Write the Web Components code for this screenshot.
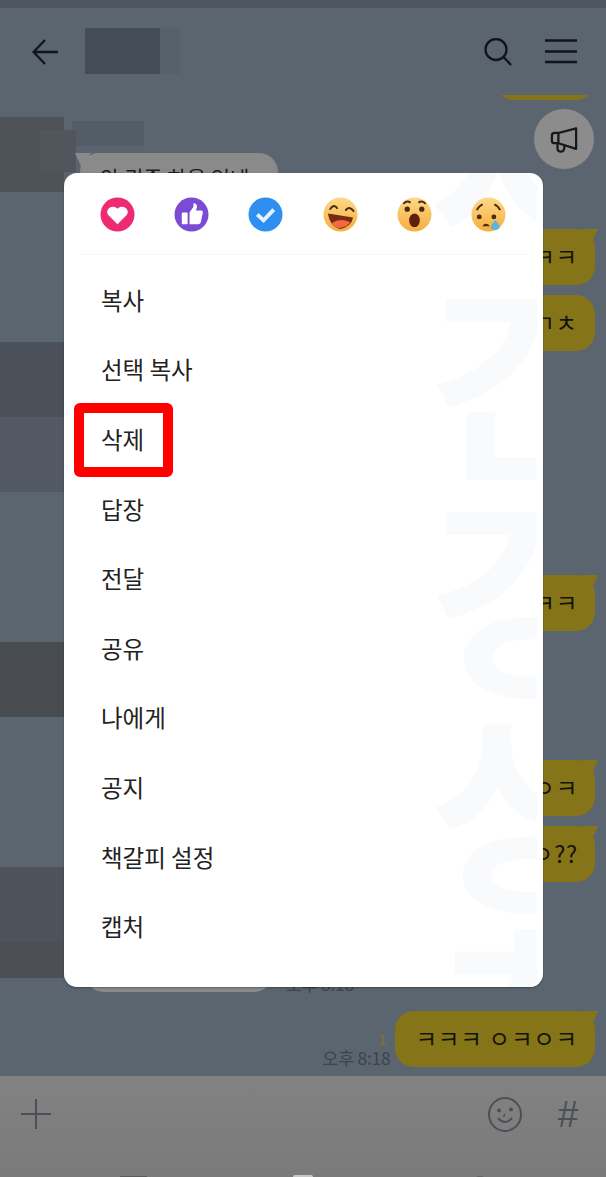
<!DOCTYPE html>
<html>
    <head>
        <meta charset="utf-8" />
        <title>Chat menu</title>
        <style>
            html, body { margin: 0; padding: 0; }
            body { font-family: "Noto Sans CJK KR", "Noto Sans", sans-serif; }
        </style>
    </head>
    <body>
        <chat-screen>
            <chat-header></chat-header>
            <chat-log>
                <left-blocks slot="left"></left-blocks>
                <chat-bubble style="margin-top:-51px;width:100px"></chat-bubble>
                <div style="margin:21px 0 0 8px;width:72px;height:25px;background:#525d68"></div>
                <chat-bubble side="left" tail style="margin:7px 0 0 16px;width:198px;height:48px">안 귀중 하울 있네</chat-bubble>
                <chat-bubble tail style="margin-top:28px">ㅋㅋㅋㅋ ㅋㅋㅋ</chat-bubble>
                <chat-bubble style="margin-top:10px">ㅋㅋㅋ ㄱㅊ</chat-bubble>
                <chat-bubble tail style="margin-top:224px">ㅋㅋㅋㅋ</chat-bubble>
                <chat-bubble tail style="margin-top:129px">ㅋㅋㅇㅋ</chat-bubble>
                <chat-bubble tail style="margin-top:10px">ㅋㅋㅋ ㅇ??</chat-bubble>
                <div style="margin:58px 0 0 21px;display:flex;align-items:flex-end;gap:13px">
                    <chat-bubble side="left" style="width:188px;height:52px"></chat-bubble>
                    <span style="font-size:17px;line-height:18px;color:#3d444c;margin-bottom:-1px">오후 8:18</span>
                </div>
                <div style="margin-top:19px;display:flex;justify-content:flex-end;align-items:flex-end;gap:5px">
                    <div style="display:flex;flex-direction:column;align-items:flex-end;margin-bottom:-1px">
                        <span style="font-size:14px;line-height:18px;color:#857518;margin-right:4px">1</span>
                        <span style="font-size:17.5px;line-height:20px;letter-spacing:-0.3px;color:#3d444c">오후 8:18</span>
                    </div>
                    <chat-bubble tail style="margin:0">ㅋㅋㅋ ㅇㅋㅇㅋ</chat-bubble>
                </div>
            </chat-log>
            <chat-input></chat-input>
            <context-menu>
                <menu-item>복사</menu-item>
                <menu-item>선택 복사</menu-item>
                <menu-item marked>삭제</menu-item>
                <menu-item>답장</menu-item>
                <menu-item>전달</menu-item>
                <menu-item>공유</menu-item>
                <menu-item>나에게</menu-item>
                <menu-item>공지</menu-item>
                <menu-item>책갈피 설정</menu-item>
                <menu-item>캡처</menu-item>
            </context-menu>
        </chat-screen>

        <script>
            // small helper, every element is just a shadow root with static markup
            function element(name, html) {
                customElements.define(name, class extends HTMLElement {
                    constructor() {
                        super()
                        this.attachShadow({ mode: 'open' }).innerHTML = html
                    }
                })
            }

            element('chat-screen', `
                <style>
                    :host {
                        display: flex;
                        flex-direction: column;
                        position: relative;
                        width: 606px;
                        height: 1177px;
                        overflow: hidden;
                        background: #5a6570;
                        border-top: 8px solid #4d5661;
                        box-sizing: border-box;
                    }
                </style>
                <slot></slot>
            `)

            element('chat-header', `
                <style>
                    :host {
                        display: flex;
                        align-items: center;
                        flex: none;
                        height: 87px;
                        padding: 0 29px 0 32px;
                        box-sizing: border-box;
                    }
                    .title { display: flex; height: 46px; margin: -1px 0 0 27px; }
                    .title i { width: 75px; background: #444c55; }
                    .title b { width: 20px; background: #57616b; }
                    .right { display: flex; align-items: center; gap: 33px; margin-left: auto; }
                    svg { display: block; fill: none; stroke: #10151a; stroke-width: 2.3; }
                </style>
                <svg width="26" height="26" viewBox="0 0 26 26" style="margin-top:1px">
                    <path d="M26 13H1.5M13 1L1.5 13L13 25" />
                </svg>
                <div class="title"><i></i><b></b></div>
                <div class="right">
                    <svg width="28" height="28" viewBox="0 0 28 28">
                        <circle cx="12" cy="11.5" r="10.5" />
                        <path d="M19.5 19L27 27" />
                    </svg>
                    <svg width="32" height="25" viewBox="0 0 32 25">
                        <path d="M0 1.5H32M0 12.5H32M0 23H32" stroke-width="2.6" />
                    </svg>
                </div>
            `)

            element('chat-log', `
                <style>
                    :host {
                        display: grid;
                        grid-template-columns: 64px 1fr;
                        flex: 1;
                        min-height: 0;
                        position: relative;
                        overflow: hidden;
                    }
                    .msgs { display: flex; flex-direction: column; padding-right: 11px; min-width: 0; }
                    .msgs ::slotted(chat-bubble) { align-self: flex-end; }
                    .msgs ::slotted(chat-bubble[side="left"]) { align-self: flex-start; }
                    .notice {
                        position: absolute;
                        top: 14px;
                        right: 12px;
                        width: 60px;
                        height: 60px;
                        display: flex;
                        align-items: center;
                        justify-content: center;
                        border-radius: 50%;
                        background: #8c8c8c;
                    }
                    svg { fill: none; stroke: #16191c; stroke-width: 2.4; stroke-linejoin: round; }
                </style>
                <slot name="left"></slot>
                <div class="msgs"><slot></slot></div>
                <div class="notice">
                    <svg width="28" height="27" viewBox="0 0 30 28">
                        <path d="M28 2V24L9 18H5Q2 18 2 15V10Q2 7 5 7H9Z" />
                        <path d="M9 7V18M8 18V23Q8 27 12 27Q15.500 27 15.500 21" />
                    </svg>
                </div>
            `)

            element('left-blocks', `
                <style>
                    :host { display: flex; flex-direction: column; position: relative; }
                    div { height: 75px; flex: none; }
                    .a { margin-top: 22px; background: #4d5359; position: relative; }
                    .a::after {
                        content: '';
                        position: absolute;
                        left: 40px;
                        top: 13px;
                        width: 36px;
                        height: 42px;
                        background: #50565c;
                    }
                    .gap { margin-top: 150px; }
                </style>
                <div class="a"></div>
                <div class="gap" style="background:#4b5158"></div>
                <div style="background:#525962"></div>
                <div class="gap" style="background:#484c50"></div>
                <div class="gap" style="background:#4e525a"></div>
                <div style="background:#4c5055;height:36px"></div>
            `)

            element('chat-bubble', `
                <style>
                    :host {
                        display: flex;
                        align-items: center;
                        position: relative;
                        flex: none;
                        box-sizing: border-box;
                        height: 56px;
                        padding: 0 17px 0 20px;
                        border-radius: 19px;
                        background: #857518;
                        color: #14140a;
                        font-size: 23.5px;
                        letter-spacing: 0.75px;
                        line-height: 1;
                        white-space: nowrap;
                    }
                    :host([side="left"]) {
                        background: #8a8a8a;
                        padding: 0 20px;
                        color: #1c1c1c;
                        font-size: 21px;
                        letter-spacing: 0;
                    }
                    :host([tail])::after {
                        content: '';
                        position: absolute;
                        top: 0;
                        right: -3px;
                        width: 16px;
                        height: 14px;
                        background: #857518;
                        clip-path: polygon(100% 0, 0 0, 60% 100%);
                    }
                    :host([side="left"][tail])::after {
                        right: auto;
                        left: -5px;
                        background: #8a8a8a;
                        clip-path: polygon(0 0, 100% 0, 40% 100%);
                    }
                </style>
                <slot></slot>
            `)

            element('chat-input', `
                <style>
                    :host {
                        display: block;
                        flex: none;
                        height: 101px;
                        background: linear-gradient(#828282, #7a7a7a);
                    }
                    .bar { display: flex; align-items: center; height: 76px; padding: 0 25px 0 21px; }
                    svg { display: block; fill: none; stroke: #4b5056; stroke-width: 2; }
                    .hash { margin-left: 33px; width: 26px; text-align: center; font: 37px/1 "Liberation Sans", sans-serif; color: #4b5056; }
                    .smile { margin-left: auto; }
                    .nav { display: flex; align-items: flex-end; height: 25px; padding-left: 120px; }
                    .nav i { display: block; height: 1px; }
                    .nav .recent { width: 27px; background: #5c5c5c; }
                    .nav .home { width: 20px; margin-left: 146px; height: 2px; border-radius: 10px 10px 0 0; background: #c8c8c8; }
                    .nav .back { width: 6px; margin-left: 164px; background: #666; }
                </style>
                <div class="bar">
                    <svg width="30" height="30" viewBox="0 0 30 30"><path d="M15 0V30M0 15H30" /></svg>
                    <svg class="smile" width="34" height="35" viewBox="0 0 34 35">
                        <ellipse cx="17" cy="17.500" rx="16" ry="16.500" />
                        <path d="M10 21Q17 29 24 21" />
                        <circle cx="11" cy="13.500" r="1" />
                        <circle cx="23" cy="12.500" r="1" />
                        <path d="M17 17Q15.500 19 16 20" stroke-width="1.400" />
                    </svg>
                    <span class="hash">#</span>
                </div>
                <div class="nav"><i class="recent"></i><i class="home"></i><i class="back"></i></div>
            `)

            element('menu-item', `
                <style>
                    :host {
                        display: flex;
                        align-items: center;
                        position: relative;
                        height: 69.6px;
                        padding-left: 37px;
                        font-size: 23.5px;
                        color: #222;
                    }
                    :host([marked])::after {
                        content: '';
                        position: absolute;
                        left: 10px;
                        top: -1px;
                        width: 99px;
                        height: 74px;
                        box-sizing: border-box;
                        border: 10px solid #f00;
                        border-radius: 6px;
                    }
                </style>
                <slot></slot>
            `)

            element('context-menu', `
                <style>
                    :host {
                        display: block;
                        position: absolute;
                        left: 64px;
                        top: 165px;
                        width: 479px;
                        height: 814px;
                        border-radius: 13px;
                        background: #fff;
                        overflow: hidden;
                        box-shadow: 0 1px 2px rgba(0, 0, 0, 0.3);
                    }
                    .mark {
                        position: absolute;
                        left: 366px;
                        top: -125px;
                        width: 107px;
                        overflow: hidden;
                        font-size: 215px;
                        line-height: 215px;
                        font-weight: 700;
                        color: #f9fafc;
                    }
                    .mark span { display: block; width: 230px; }
                    .emojis {
                        display: flex;
                        justify-content: space-between;
                        position: relative;
                        margin: 0 15px;
                        padding: 24px 22px 22px 21px;
                        border-bottom: 1px solid #f5f6f8;
                    }
                    svg { display: block; width: 35px; height: 35px; }
                    .list { position: relative; padding-top: 10px; }
                </style>
                <div class="mark"><span>사</span><span>간</span><span>강</span><span>상</span><span>추</span></div>
                <div class="emojis">
                    <svg viewBox="0 0 36 36">
                        <circle cx="18" cy="18" r="17.500" fill="#ee2a72" />
                        <path d="M18 28L8.500 18.500C4.500 13 12.500 6.500 18 12C23.500 6.500 31.500 13 27.500 18.500Z" fill="#fff" />
                    </svg>
                    <svg viewBox="0 0 36 36">
                        <circle cx="18" cy="18" r="17.500" fill="#7b4bd6" />
                        <rect x="8" y="16" width="6" height="12" rx="1" fill="#fff" />
                        <path d="M16 16L20 10V6.500C23 6.500 24 9 23.500 11L22.500 14H28C29.500 14 30 15.500 29.500 17L27.500 26C27 27.500 26 28 25 28H16Z" fill="#fff" />
                    </svg>
                    <svg viewBox="0 0 36 36">
                        <circle cx="18" cy="18" r="17.500" fill="#2e8ff0" />
                        <path d="M9.500 18L16 24L26.500 13" fill="none" stroke="#e4f2ff" stroke-width="4" />
                    </svg>
                    <svg viewBox="0 0 36 36">
                        <defs>
                            <linearGradient id="g1" x1="0" y1="0" x2="0" y2="1">
                                <stop offset="0" stop-color="#fdd98a" />
                                <stop offset="1" stop-color="#f6ad3c" />
                            </linearGradient>
                        </defs>
                        <circle cx="18" cy="18" r="17.500" fill="url(#g1)" />
                        <path d="M7 13Q11 6 15 12M23 14Q27 8 32 15" fill="none" stroke="#4a2a10" stroke-width="2" />
                        <path d="M5 17L31 21Q29 31 17 33Q7 30 5 17Z" fill="#7a2a12" />
                        <path d="M9 27Q17 21 28 26Q25 31 17 32Q11.500 32 9 27Z" fill="#ef6a3c" />
                    </svg>
                    <svg viewBox="0 0 36 36">
                        <defs>
                            <linearGradient id="g2" x1="0" y1="0" x2="0" y2="1">
                                <stop offset="0" stop-color="#fdd98a" />
                                <stop offset="1" stop-color="#f6ad3c" />
                            </linearGradient>
                        </defs>
                        <circle cx="18" cy="18" r="17.500" fill="url(#g2)" />
                        <path d="M6.500 7Q10 3 14 6M22 6Q26 3 29.500 7" fill="none" stroke="#4a2a10" stroke-width="2" />
                        <circle cx="10.500" cy="12.500" r="2.700" fill="#4a2a10" />
                        <circle cx="25.500" cy="12.500" r="2.700" fill="#4a2a10" />
                        <ellipse cx="18" cy="24" rx="5.500" ry="7" fill="#5e1f0c" />
                    </svg>
                    <svg viewBox="0 0 36 36">
                        <defs>
                            <linearGradient id="g3" x1="0" y1="0" x2="0" y2="1">
                                <stop offset="0" stop-color="#fdd98a" />
                                <stop offset="1" stop-color="#f6ad3c" />
                            </linearGradient>
                        </defs>
                        <circle cx="18" cy="18" r="17.500" fill="url(#g3)" />
                        <path d="M6 13.500Q8 9 12 7.500M24 7.500Q28 9 30 13.500" fill="none" stroke="#4a2a10" stroke-width="2" />
                        <circle cx="8.500" cy="20.500" r="2.500" fill="#4a2a10" />
                        <circle cx="23.500" cy="20.500" r="2.500" fill="#4a2a10" />
                        <path d="M11.500 30Q15.500 25 19.500 30Z" fill="#4a2a10" />
                        <path d="M25 24Q30 29 29.500 32Q25 36 20.500 32Q20 29 25 24Z" fill="#5fb4d8" />
                    </svg>
                </div>
                <div class="list"><slot></slot></div>
            `)
        </script>
    </body>
</html>
